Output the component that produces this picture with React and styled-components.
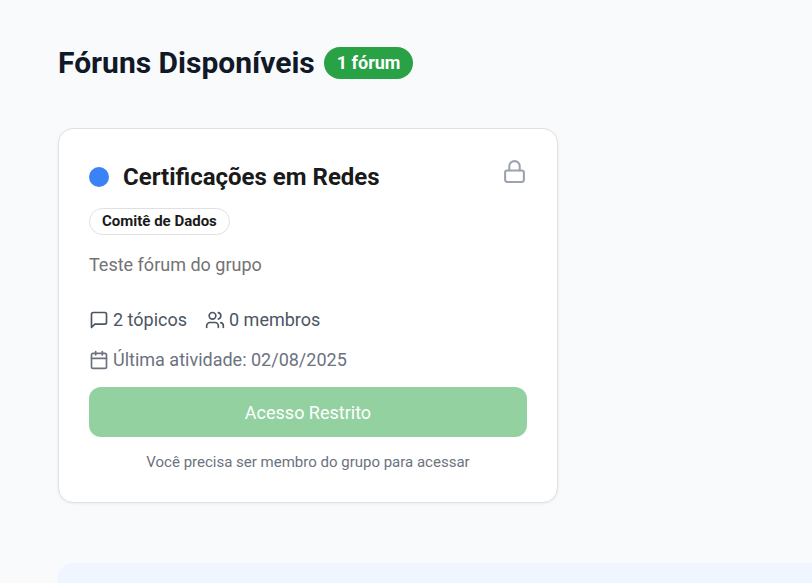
import React from "react";
import styled, { createGlobalStyle } from "styled-components";
import { Lock, Users, Calendar } from "lucide-react";

const GlobalStyle = createGlobalStyle`
  *, *::before, *::after { box-sizing: border-box; }
  body {
    margin: 0;
    background: #f9fafc;
    color: #111827;
    font-family: Roboto, "Liberation Sans", sans-serif;
  }
  h1, h2, p { margin: 0; }
`;

const Page = styled.main`
  display: flex;
  flex-direction: column;
  min-height: 100vh;
  padding: 44px 0 0 58px;
`;

const Header = styled.header`
  display: flex;
  align-items: center;
  gap: 9px;
  margin-bottom: 46px;
`;

const Title = styled.h1`
  font-size: 30px;
  line-height: 38px;
  font-weight: 700;
`;

const CountBadge = styled.span`
  padding: 0 13px;
  border-radius: 16px;
  background: #28a244;
  color: #fff;
  font-size: 18px;
  line-height: 32px;
  font-weight: 700;
`;

const Card = styled.article`
  display: flex;
  flex-direction: column;
  width: 100%;
  max-width: 500px;
  padding: 30px 30px 28px;
  border: 1px solid #dfe0e2;
  border-radius: 15px;
  background: #fff;
  box-shadow: 0 1px 3px rgba(0, 0, 0, 0.06);
`;

const CardHeader = styled.div`
  display: flex;
  align-items: flex-start;
  justify-content: space-between;
  color: #9ca3af;
`;

const CardTitle = styled.h2`
  display: flex;
  align-items: center;
  gap: 14px;
  padding-top: 2px;
  color: #1a1a1a;
  font-size: 24px;
  line-height: 32px;
  font-weight: 700;
`;

const ColorDot = styled.span`
  width: 20px;
  height: 20px;
  border-radius: 50%;
  background: #3b82f6;
`;

const GroupTag = styled.span`
  align-self: flex-start;
  margin-top: 15px;
  padding: 0 12px;
  border: 1px solid #dfe0e2;
  border-radius: 14px;
  color: #1a1a1a;
  font-size: 15px;
  line-height: 25px;
  font-weight: 700;
`;

const Description = styled.p`
  margin: 15px 0 25px;
  color: #737373;
  font-size: 18px;
  line-height: 30px;
`;

const MetaRow = styled.div`
  display: flex;
  gap: 18px;
  margin-bottom: 10px;
`;

const Meta = styled.span`
  display: flex;
  align-items: center;
  gap: 4px;
  color: ${({ $muted }) => ($muted ? "#6b7280" : "#4b5563")};
  font-size: 18px;
  line-height: 30px;
`;

const AccessButton = styled.button`
  width: 100%;
  height: 50px;
  margin: 2px 0 13px;
  padding: 2px 16px 0;
  border: 0;
  border-radius: 12px;
  background: #93d1a1;
  color: #fff;
  font: 400 18px/26px Roboto, "Liberation Sans", sans-serif;
`;

const Hint = styled.p`
  color: #6b7280;
  font-size: 15px;
  line-height: 24px;
  text-align: center;
`;

const InfoPanel = styled.section`
  flex: 1;
  margin-top: 60px;
  border-radius: 15px 0 0 0;
  background: #eff6ff;
`;

function TopicsIcon() {
  return (
    <svg
      width="20"
      height="20"
      viewBox="0 0 24 24"
      fill="none"
      stroke="currentColor"
      strokeWidth="2"
      strokeLinecap="round"
      strokeLinejoin="round"
      aria-hidden="true"
    >
      <path d="M21 15a2 2 0 0 1-2 2H7l-4 4V5a2 2 0 0 1 2-2h14a2 2 0 0 1 2 2z" />
    </svg>
  );
}

export default function App() {
  return (
    <>
      <GlobalStyle />
      <Page>
        <Header>
          <Title>Fóruns Disponíveis</Title>
          <CountBadge>1 fórum</CountBadge>
        </Header>
        <Card>
          <CardHeader>
            <CardTitle>
              <ColorDot />
              Certificações em Redes
            </CardTitle>
            <Lock size={25} aria-label="Restrito" />
          </CardHeader>
          <GroupTag>Comitê de Dados</GroupTag>
          <Description>Teste fórum do grupo</Description>
          <MetaRow>
            <Meta>
              <TopicsIcon />2 tópicos
            </Meta>
            <Meta>
              <Users size={20} />0 membros
            </Meta>
          </MetaRow>
          <MetaRow>
            <Meta $muted>
              <Calendar size={20} />
              Última atividade: 02/08/2025
            </Meta>
          </MetaRow>
          <AccessButton type="button" disabled>
            Acesso Restrito
          </AccessButton>
          <Hint>Você precisa ser membro do grupo para acessar</Hint>
        </Card>
        <InfoPanel />
      </Page>
    </>
  );
}
